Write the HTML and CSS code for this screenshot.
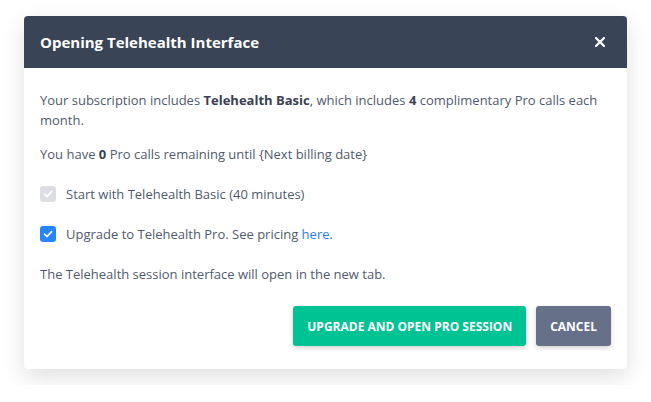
FILE: index.html
```html
<!DOCTYPE html>
<html lang="en">
<head>
    <meta charset="UTF-8">
    <meta name="viewport" content="width=device-width, initial-scale=1.0">
    <title>Opening Telehealth Interface</title>
    <link rel="stylesheet" href="styles.css">
</head>
<body>

    <div class="modal">
        <div class="modal-header">
            <h2 class="modal-title">Opening Telehealth Interface</h2>
            <span class="modal-close">
                <svg width="12" height="12" viewBox="0 0 12 12">
                    <path d="M2 2 L10 10 M10 2 L2 10" stroke="#fff" stroke-width="2.2" stroke-linecap="round"/>
                </svg>
            </span>
        </div>

        <div class="modal-body">
            <p class="intro">Your subscription includes <strong>Telehealth Basic</strong>, which includes <strong>4</strong> complimentary Pro calls each month.</p>
            <p class="remaining">You have <strong>0</strong> Pro calls remaining until {Next billing date}</p>

            <label class="check check-disabled">
                <span class="box">
                    <svg width="12" height="12" viewBox="0 0 12 12">
                        <path d="M2.5 6.2 L5 8.6 L9.6 3.6" fill="none" stroke="#fff" stroke-width="1.6" stroke-linecap="round" stroke-linejoin="round"/>
                    </svg>
                </span>
                Start with Telehealth Basic (40 minutes)
            </label>

            <label class="check check-on">
                <span class="box">
                    <svg width="12" height="12" viewBox="0 0 12 12">
                        <path d="M2.5 6.2 L5 8.6 L9.6 3.6" fill="none" stroke="#fff" stroke-width="1.6" stroke-linecap="round" stroke-linejoin="round"/>
                    </svg>
                </span>
                <span>Upgrade to Telehealth Pro. See pricing <a href="#">here</a>.</span>
            </label>

            <p class="note">The Telehealth session interface will open in the new tab.</p>

            <div class="actions">
                <button class="btn btn-primary">Upgrade and open Pro session</button>
                <button class="btn btn-cancel">Cancel</button>
            </div>
        </div>
    </div>

</body>
</html>
```

FILE: styles.css
```css
body {
    font-family: "Open Sans", Arial, sans-serif;
    background-color: #fff;
    margin: 0;
    padding: 16px 24px;
    color: #515a6d;
}

.modal {
    width: 603px;
    background-color: #fff;
    border-radius: 4px;
    box-shadow: 0 8px 24px rgba(0, 0, 0, 0.13);
    overflow: hidden;
}

.modal-header {
    background-color: #394457;
    height: 52px;
    display: flex;
    align-items: center;
    justify-content: space-between;
    padding: 0 21px 0 16px;
}

.modal-title {
    margin: 0;
    color: #fff;
    font-size: 15px;
    font-weight: 700;
}

.modal-close {
    display: flex;
    cursor: pointer;
}

.modal-body {
    padding: 22px 16px 23px;
    font-size: 13px;
    line-height: 20px;
}

.modal-body p {
    margin: 0;
}

.modal-body strong {
    color: #3a4152;
}

.intro {
    margin-bottom: 14px !important;
}

.check {
    display: flex;
    align-items: center;
    gap: 10px;
    cursor: pointer;
}

.check-disabled {
    margin-top: 20px;
}

.check-on {
    margin-top: 20px;
}

.box {
    width: 16px;
    height: 16px;
    border-radius: 3px;
    display: flex;
    align-items: center;
    justify-content: center;
}

.check-disabled .box {
    background-color: #dcdee3;
}

.check-on .box {
    background-color: #2684ff;
}

.check a {
    color: #2b7de9;
    text-decoration: none;
}

.note {
    margin-top: 20px !important;
}

.actions {
    display: flex;
    justify-content: flex-end;
    gap: 10px;
    margin-top: 22px;
}

.btn {
    font-family: "Open Sans", Arial, sans-serif;
    font-size: 12px;
    font-weight: 700;
    text-transform: uppercase;
    color: #fff;
    height: 40px;
    padding: 0 14px;
    border: none;
    border-radius: 3px;
    cursor: pointer;
    box-shadow: 0 2px 5px rgba(0, 0, 0, 0.18);
}

.btn-primary {
    background-color: #00c394;
}

.btn-cancel {
    background-color: #667189;
}
```
